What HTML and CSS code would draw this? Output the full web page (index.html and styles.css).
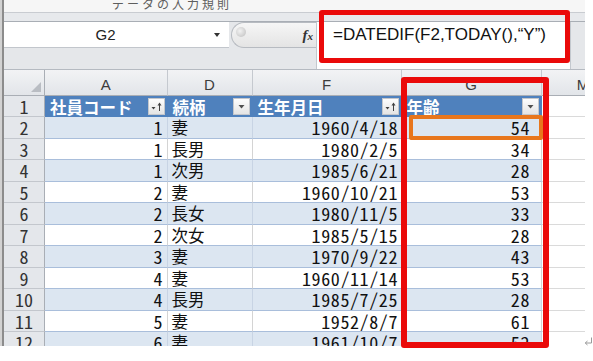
FILE: index.html
```html
<!DOCTYPE html>
<html lang="ja">
<head>
<meta charset="utf-8">
<title>年齢の計算</title>
<link rel="stylesheet" href="styles.css">
</head>
<body>
<div class="page">
  <div class="app">
    <div class="ribbon"><span>データの入力規則</span></div>

    <div class="fbar">
      <div class="namecol">
        <div class="namebox"><span class="ref">G2</span><span class="drop"></span></div>
      </div>
      <div class="midcol">
        <div class="handle"><span class="knob"></span><span class="fx">f<i>x</i></span></div>
      </div>
      <div class="formula">=DATEDIF(F2,TODAY(),“Y”)</div>
      <div class="fright"></div>
    </div>

    <div class="sheet">
      <div class="row colhead">
        <div class="corner"><svg width="10" height="10" viewBox="0 0 10 10"><polygon points="10,0 10,10 0,10" fill="#b9bdc3"/></svg></div>
        <div>A</div><div>D</div><div>F</div><div>G</div><div>M</div>
      </div>

      <div class="row thead">
        <div class="rn">1</div>
        <div class="th">社員コード<span class="fbtn"><svg width="15" height="15" viewBox="0 0 15 15"><polygon points="2.5,8 6.5,8 4.5,10.5" fill="#404040"/><line x1="10.5" y1="5" x2="10.5" y2="12" stroke="#404040" stroke-width="1"/><polygon points="8.5,6.5 12.5,6.5 10.5,3.5" fill="#404040"/></svg></span></div>
        <div class="th">続柄<span class="fbtn"><svg width="15" height="15" viewBox="0 0 15 15"><polygon points="4.5,6 10.5,6 7.5,9.5" fill="#505050"/></svg></span></div>
        <div class="th">生年月日<span class="fbtn"><svg width="15" height="15" viewBox="0 0 15 15"><polygon points="2.5,8 6.5,8 4.5,10.5" fill="#404040"/><line x1="10.5" y1="5" x2="10.5" y2="12" stroke="#404040" stroke-width="1"/><polygon points="8.5,6.5 12.5,6.5 10.5,3.5" fill="#404040"/></svg></span></div>
        <div class="th">年齢<span class="fbtn"><svg width="15" height="15" viewBox="0 0 15 15"><polygon points="4.5,6 10.5,6 7.5,9.5" fill="#505050"/></svg></span></div>
        <div class="blank"></div>
      </div>

      <div class="row band"><div class="rn">2</div><div class="n code">1</div><div class="t">妻</div><div class="n date">1960/4/18</div><div class="n age">54</div><div class="blank"></div></div>
      <div class="row"><div class="rn">3</div><div class="n code">1</div><div class="t">長男</div><div class="n date">1980/2/5</div><div class="n age">34</div><div class="blank"></div></div>
      <div class="row band"><div class="rn">4</div><div class="n code">1</div><div class="t">次男</div><div class="n date">1985/6/21</div><div class="n age">28</div><div class="blank"></div></div>
      <div class="row"><div class="rn">5</div><div class="n code">2</div><div class="t">妻</div><div class="n date">1960/10/21</div><div class="n age">53</div><div class="blank"></div></div>
      <div class="row band"><div class="rn">6</div><div class="n code">2</div><div class="t">長女</div><div class="n date">1980/11/5</div><div class="n age">33</div><div class="blank"></div></div>
      <div class="row"><div class="rn">7</div><div class="n code">2</div><div class="t">次女</div><div class="n date">1985/5/15</div><div class="n age">28</div><div class="blank"></div></div>
      <div class="row band"><div class="rn">8</div><div class="n code">3</div><div class="t">妻</div><div class="n date">1970/9/22</div><div class="n age">43</div><div class="blank"></div></div>
      <div class="row"><div class="rn">9</div><div class="n code">4</div><div class="t">妻</div><div class="n date">1960/11/14</div><div class="n age">53</div><div class="blank"></div></div>
      <div class="row band"><div class="rn">10</div><div class="n code">4</div><div class="t">長男</div><div class="n date">1985/7/25</div><div class="n age">28</div><div class="blank"></div></div>
      <div class="row"><div class="rn">11</div><div class="n code">5</div><div class="t">妻</div><div class="n date">1952/8/7</div><div class="n age">61</div><div class="blank"></div></div>
      <div class="row band"><div class="rn">12</div><div class="n code">6</div><div class="t">妻</div><div class="n date">1961/10/7</div><div class="n age">52</div><div class="blank"></div></div>
    </div>
  </div>

  <!-- highlight frames drawn over the sheet -->
  <div class="frame frame-cell"></div>
  <div class="frame frame-formula"></div>
  <div class="frame frame-col"></div>
  <svg class="ret" width="9" height="9" viewBox="0 0 9 9"><path d="M7.5 0.5 V6 H1.5" fill="none" stroke="#9a9a9a" stroke-width="1"/><polyline points="3.5,4 1.2,6 3.5,8" fill="none" stroke="#9a9a9a" stroke-width="1"/></svg>
</div>
</body>
</html>
```

FILE: styles.css
```css
* { box-sizing: border-box; margin: 0; padding: 0; }

html, body { background: #fff; }

body {
  width: 593px;
  height: 361px;
  overflow: hidden;
  font-family: "Liberation Sans", "Noto Sans CJK JP", sans-serif;
  color: #111;
}

.page {
  position: relative;
  width: 593px;
  height: 361px;
}

/* window area with its dark left edge */
.app {
  width: 585px;
  height: 346px;
  overflow: hidden;
  padding-left: 4px;
  background: linear-gradient(to right, #d2d2d2 0 2px, #8c8c8c 2px 4px, #fff 4px);
}

/* bottom sliver of the ribbon */
.ribbon {
  height: 21px;
  overflow: hidden;
  background: linear-gradient(#f6f6f6 0 12px, #c9ccd1 12px 13px, #e7e9ec 13px);
}

.ribbon span {
  display: block;
  margin-top: -6px;
  padding-left: 108px;
  font: 12px/20px "Noto Sans CJK JP", sans-serif;
  letter-spacing: 3px;
  color: #5e5e5e;
  white-space: nowrap;
}

/* formula bar */
.fbar {
  display: flex;
  height: 49px;
  border-top: 1px solid #a9aeb5;
  border-bottom: 1px solid #b5bac1;
  background: #e5e7ea;
}

.namecol { width: 225px; }

.namebox {
  display: flex;
  align-items: center;
  height: 26px;
  background: #fff;
  border-bottom: 1px solid #c2c6cc;
}

.ref {
  width: 203px;
  text-align: center;
  font-size: 15px;
  color: #222;
}

.drop {
  margin-left: 7px;
  border-left: 3.5px solid transparent;
  border-right: 3.5px solid transparent;
  border-top: 4px solid #333;
}

.midcol { width: 87px; }

.handle {
  display: flex;
  align-items: center;
  height: 26px;
  margin-left: 2px;
  border: 1px solid #b7bbc1;
  border-right: 0;
  border-radius: 13px 0 0 13px;
  background: linear-gradient(#f6f6f6, #e4e4e4);
}

.knob {
  width: 10px;
  height: 10px;
  margin: -6px 0 0 4px;
  border-radius: 50%;
  background: radial-gradient(circle at 40% 40%, #f2f2f2, #bdbdbd);
}

.fx {
  margin-left: auto;
  padding-right: 3px;
  font: italic bold 15px "Liberation Serif", serif;
  color: #333;
}

.fx i { font-size: 11px; }

.formula {
  width: 254px;
  background: #fff;
  border-left: 1px solid #c3c8ce;
  padding-left: 16px;
  font-size: 17px;
  line-height: 25px;
  color: #111;
  white-space: nowrap;
  overflow: hidden;
}

.fright {
  flex: 1;
  border-left: 1px solid #c3c8ce;
}

/* worksheet grid */
.row {
  display: grid;
  grid-template-columns: 41px 122.5px 85px 149px 140px 84px;
  width: 621.5px;
  height: 21.5px;
}

.row > div {
  border-right: 1px solid #d4d4d4;
  border-bottom: 1px solid #a9bedb;
  height: 21.5px;
  line-height: 20px;
  white-space: nowrap;
  overflow: hidden;
}

.colhead { height: 26px; }

.colhead > div {
  height: 26px;
  border-right: 1px solid #c5c9cf;
  border-bottom: 1px solid #a9aeb5;
  background: linear-gradient(#f2f3f5, #e2e5e9);
  text-align: center;
  font-size: 15px;
  line-height: 30px;
  color: #3c3c3c;
}

.colhead > .corner {
  display: flex;
  align-items: flex-end;
  justify-content: flex-end;
  padding: 0 3px 3px 0;
  border-right-color: #a9aeb5;
}

.thead { height: 21px; }
.thead > div { height: 21px; }

/* digits drawn at half-width, as in a Japanese gothic face */
.row > .rn,
.row > .n {
  font-family: "Noto Sans Mono CJK JP", "Noto Sans Mono CJK SC", "DejaVu Sans Mono", monospace;
}

.row > .rn {
  background: #e4e7eb;
  border-right: 1px solid #a9aeb5;
  border-bottom: 1px solid #c3c7cd;
  text-align: center;
  font-size: 18px;
  color: #333;
}

.thead > .th {
  display: flex;
  align-items: center;
  padding-left: 5px;
  background: #4f81bd;
  border-right: 0;
  border-bottom: 0;
  font-family: "Noto Sans CJK JP", sans-serif;
  font-weight: bold;
  font-size: 16.5px;
  color: #fff;
}

.fbtn {
  display: flex;
  align-items: center;
  justify-content: center;
  width: 17px;
  height: 17px;
  margin: 0 3px 0 auto;
  border: 1px solid #c4c7cc;
  background: linear-gradient(#fdfdfd, #e4e4e4);
}

.row > .blank {
  background: #fff;
  border-right: 0;
  border-bottom: 1px solid #dadada;
}

.band > div { background: #dce6f1; }
.band > div:not(.rn):not(.blank) { border-right-color: #c8d4e4; }

.row > .n {
  text-align: right;
  font-size: 18px;
  letter-spacing: 0.6px;
}

.row > .code { padding-right: 3.5px; }
.row > .date { padding-right: 2.5px; }
.row > .age { padding-right: 10.5px; }

.row > .t {
  padding-left: 4px;
  font-family: "Noto Sans CJK JP", sans-serif;
  font-size: 16.5px;
}

/* highlight frames */
.frame {
  position: absolute;
  border-radius: 3px;
}

.frame-formula {
  left: 319px;
  top: 10px;
  width: 251px;
  height: 53px;
  border: 5px solid #ea0a0a;
}

.frame-col {
  left: 401px;
  top: 77px;
  width: 148px;
  height: 271px;
  border: 6px solid #ea0a0a;
}

.frame-cell {
  left: 409px;
  top: 115px;
  width: 134px;
  height: 25px;
  border: 4px solid #e8761c;
  border-radius: 2px;
}

.ret {
  position: absolute;
  left: 584px;
  top: 337px;
}
```
